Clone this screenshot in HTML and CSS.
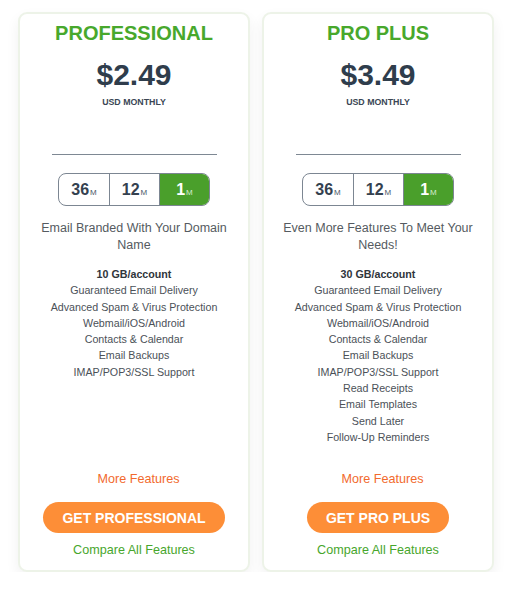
FILE: index.html
```html
<!DOCTYPE html>
<html>
<head>
<meta charset="utf-8">
<link rel="stylesheet" href="styles.css">
</head>
<body>
<div class="plans">
  <div class="card">
    <h2 class="name">PROFESSIONAL</h2>
    <div class="price">$2.49</div>
    <div class="period">USD MONTHLY</div>
    <div class="rule"></div>
    <div class="toggle">
      <span class="seg">36<small>M</small></span>
      <span class="seg">12<small>M</small></span>
      <span class="seg active">1<small>M</small></span>
    </div>
    <p class="desc">Email Branded With Your Domain Name</p>
    <ul class="features">
      <li class="strong">10 GB/account</li>
      <li>Guaranteed Email Delivery</li>
      <li>Advanced Spam &amp; Virus Protection</li>
      <li>Webmail/iOS/Android</li>
      <li>Contacts &amp; Calendar</li>
      <li>Email Backups</li>
      <li>IMAP/POP3/SSL Support</li>
    </ul>
    <div class="bottom">
      <a class="more">More Features</a>
      <a class="btn">GET PROFESSIONAL</a>
      <a class="compare">Compare All Features</a>
    </div>
  </div>
  <div class="card">
    <h2 class="name">PRO PLUS</h2>
    <div class="price">$3.49</div>
    <div class="period">USD MONTHLY</div>
    <div class="rule"></div>
    <div class="toggle">
      <span class="seg">36<small>M</small></span>
      <span class="seg">12<small>M</small></span>
      <span class="seg active">1<small>M</small></span>
    </div>
    <p class="desc">Even More Features To Meet Your Needs!</p>
    <ul class="features">
      <li class="strong">30 GB/account</li>
      <li>Guaranteed Email Delivery</li>
      <li>Advanced Spam &amp; Virus Protection</li>
      <li>Webmail/iOS/Android</li>
      <li>Contacts &amp; Calendar</li>
      <li>Email Backups</li>
      <li>IMAP/POP3/SSL Support</li>
      <li>Read Receipts</li>
      <li>Email Templates</li>
      <li>Send Later</li>
      <li>Follow-Up Reminders</li>
    </ul>
    <div class="bottom">
      <a class="more">More Features</a>
      <a class="btn">GET PRO PLUS</a>
      <a class="compare">Compare All Features</a>
    </div>
  </div>
</div>
</body>
</html>
```

FILE: styles.css
```css
* { box-sizing: border-box; }
html, body { margin: 0; padding: 0; background: #fff; }
body { font-family: "Liberation Sans", Arial, sans-serif; }

.plans {
  display: flex;
  gap: 12px;
  padding: 12px 0 0 18px;
}

.card {
  width: 232px;
  height: 560px;
  border: 2px solid #edf3e8;
  border-radius: 9px;
  background: #fff;
  box-shadow: 0 6px 14px rgba(0, 0, 0, 0.06);
  display: flex;
  flex-direction: column;
  align-items: center;
  padding: 7px 0 11px;
}

.name {
  margin: 0;
  font-size: 20px;
  line-height: 24px;
  font-weight: 700;
  color: #48a82c;
}

.price {
  margin-top: 12px;
  font-size: 30px;
  line-height: 36px;
  font-weight: 700;
  color: #2f3d4c;
}

.period {
  margin-top: 3px;
  font-size: 8.8px;
  line-height: 12px;
  font-weight: 700;
  color: #3a4654;
}

.rule {
  margin-top: 46px;
  width: 165px;
  height: 1px;
  background: #7e8893;
}

.toggle {
  margin-top: 18px;
  display: flex;
  height: 33px;
  border: 1.5px solid #7c8692;
  border-radius: 8px;
  overflow: hidden;
}

.seg {
  width: 50px;
  display: flex;
  align-items: center;
  justify-content: center;
  font-size: 16px;
  font-weight: 700;
  color: #34414f;
}
.seg + .seg { border-left: 1.5px solid #7c8692; }
.seg small {
  font-size: 8px;
  font-weight: 400;
  margin-left: 1px;
  margin-top: 5px;
  color: #4b5968;
}
.seg.active { background: #4a9f2b; color: #fff; }
.seg.active small { color: #d6ecce; }

.desc {
  margin: 14px 0 0;
  width: 200px;
  text-align: center;
  font-size: 12.5px;
  line-height: 17px;
  color: #555b61;
}

.features {
  list-style: none;
  margin: 12px 0 0;
  padding: 0;
  text-align: center;
  font-size: 10.7px;
  line-height: 16.3px;
  color: #4b5158;
}
.features .strong { font-weight: 700; color: #2f353b; }

.bottom {
  margin-top: auto;
  display: flex;
  flex-direction: column;
  align-items: center;
}

.more {
  margin-left: 9px;
  font-size: 12.6px;
  line-height: 17px;
  color: #f26a2d;
}

.btn {
  margin-top: 14px;
  height: 31px;
  padding: 0 19px;
  border-radius: 16px;
  background: #fd8e37;
  color: #fff;
  font-size: 14px;
  font-weight: 700;
  display: flex;
  align-items: center;
  justify-content: center;
}

.compare {
  margin-top: 9px;
  font-size: 12.6px;
  line-height: 17px;
  color: #47a62c;
}
```
